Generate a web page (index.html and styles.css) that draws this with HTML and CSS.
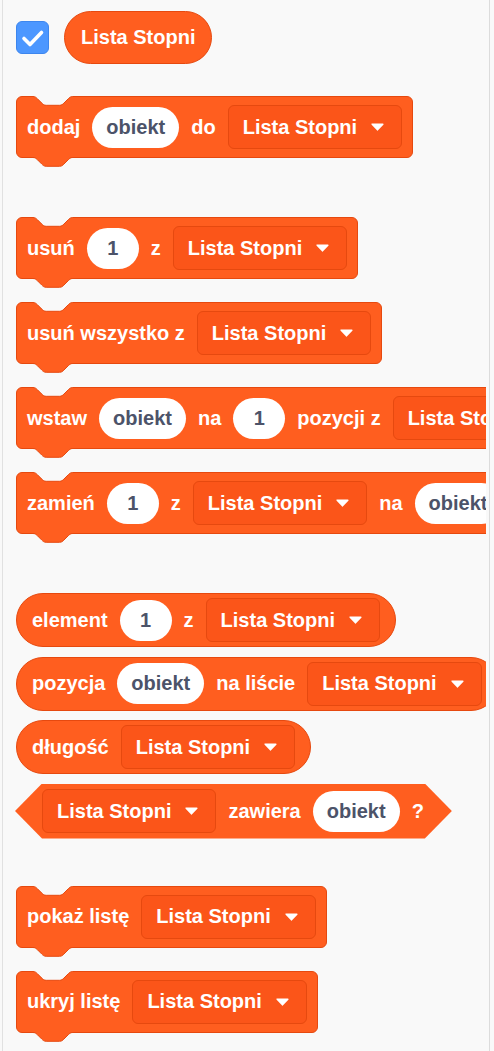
FILE: index.html
```html
<!DOCTYPE html>
<html lang="pl">
<head>
<meta charset="utf-8">
<title>Lista Stopni</title>
<link rel="stylesheet" href="styles.css">
</head>
<body>
<div class="frame">
  <div class="palette">

    <div class="var-row">
      <span class="checkbox">
        <svg viewBox="0 0 33 33" width="33" height="33"><path d="M8 17.5 L14 23.5 L25.5 11.5" fill="none" stroke="#fff" stroke-width="3.6" stroke-linecap="round" stroke-linejoin="round"/></svg>
      </span>
      <span class="reporter var">Lista Stopni</span>
    </div>

    <div class="stack gap-first">
      <svg class="notch-top" viewBox="0 0 40 11" width="40" height="11"><path class="nt-fill" d="M0,0 L0,0.5 c2.2,0 3.3,1.1 4.4,2.2 l4.4,4.4 c1.1,1.1 2.2,2.2 4.4,2.2 h13.3 c2.2,0 3.3,-1.1 4.4,-2.2 l4.4,-4.4 c1.1,-1.1 2.2,-2.2 4.4,-2.2 L39.7,0 Z"/><path class="n-line" d="M0,0.5 c2.2,0 3.3,1.1 4.4,2.2 l4.4,4.4 c1.1,1.1 2.2,2.2 4.4,2.2 h13.3 c2.2,0 3.3,-1.1 4.4,-2.2 l4.4,-4.4 c1.1,-1.1 2.2,-2.2 4.4,-2.2"/></svg>
      <span class="label">dodaj</span>
      <span class="input">obiekt</span>
      <span class="label">do</span>
      <span class="dropdown">Lista Stopni<svg class="arrow" viewBox="0 0 13 8" width="13" height="8"><path d="M1.2 1.2 H11.8 L6.5 6.8 Z"/></svg></span>
      <svg class="notch-bottom" viewBox="0 0 40 11" width="40" height="11"><path class="nb-fill" d="M0,0 L0,0.5 c2.2,0 3.3,1.1 4.4,2.2 l4.4,4.4 c1.1,1.1 2.2,2.2 4.4,2.2 h13.3 c2.2,0 3.3,-1.1 4.4,-2.2 l4.4,-4.4 c1.1,-1.1 2.2,-2.2 4.4,-2.2 L39.7,0 Z"/><path class="n-line" d="M0,0.5 c2.2,0 3.3,1.1 4.4,2.2 l4.4,4.4 c1.1,1.1 2.2,2.2 4.4,2.2 h13.3 c2.2,0 3.3,-1.1 4.4,-2.2 l4.4,-4.4 c1.1,-1.1 2.2,-2.2 4.4,-2.2"/></svg>
    </div>

    <div class="stack gap-group">
      <svg class="notch-top" viewBox="0 0 40 11" width="40" height="11"><path class="nt-fill" d="M0,0 L0,0.5 c2.2,0 3.3,1.1 4.4,2.2 l4.4,4.4 c1.1,1.1 2.2,2.2 4.4,2.2 h13.3 c2.2,0 3.3,-1.1 4.4,-2.2 l4.4,-4.4 c1.1,-1.1 2.2,-2.2 4.4,-2.2 L39.7,0 Z"/><path class="n-line" d="M0,0.5 c2.2,0 3.3,1.1 4.4,2.2 l4.4,4.4 c1.1,1.1 2.2,2.2 4.4,2.2 h13.3 c2.2,0 3.3,-1.1 4.4,-2.2 l4.4,-4.4 c1.1,-1.1 2.2,-2.2 4.4,-2.2"/></svg>
      <span class="label">usuń</span>
      <span class="input num">1</span>
      <span class="label">z</span>
      <span class="dropdown">Lista Stopni<svg class="arrow" viewBox="0 0 13 8" width="13" height="8"><path d="M1.2 1.2 H11.8 L6.5 6.8 Z"/></svg></span>
      <svg class="notch-bottom" viewBox="0 0 40 11" width="40" height="11"><path class="nb-fill" d="M0,0 L0,0.5 c2.2,0 3.3,1.1 4.4,2.2 l4.4,4.4 c1.1,1.1 2.2,2.2 4.4,2.2 h13.3 c2.2,0 3.3,-1.1 4.4,-2.2 l4.4,-4.4 c1.1,-1.1 2.2,-2.2 4.4,-2.2 L39.7,0 Z"/><path class="n-line" d="M0,0.5 c2.2,0 3.3,1.1 4.4,2.2 l4.4,4.4 c1.1,1.1 2.2,2.2 4.4,2.2 h13.3 c2.2,0 3.3,-1.1 4.4,-2.2 l4.4,-4.4 c1.1,-1.1 2.2,-2.2 4.4,-2.2"/></svg>
    </div>

    <div class="stack gap-stack">
      <svg class="notch-top" viewBox="0 0 40 11" width="40" height="11"><path class="nt-fill" d="M0,0 L0,0.5 c2.2,0 3.3,1.1 4.4,2.2 l4.4,4.4 c1.1,1.1 2.2,2.2 4.4,2.2 h13.3 c2.2,0 3.3,-1.1 4.4,-2.2 l4.4,-4.4 c1.1,-1.1 2.2,-2.2 4.4,-2.2 L39.7,0 Z"/><path class="n-line" d="M0,0.5 c2.2,0 3.3,1.1 4.4,2.2 l4.4,4.4 c1.1,1.1 2.2,2.2 4.4,2.2 h13.3 c2.2,0 3.3,-1.1 4.4,-2.2 l4.4,-4.4 c1.1,-1.1 2.2,-2.2 4.4,-2.2"/></svg>
      <span class="label">usuń wszystko z</span>
      <span class="dropdown">Lista Stopni<svg class="arrow" viewBox="0 0 13 8" width="13" height="8"><path d="M1.2 1.2 H11.8 L6.5 6.8 Z"/></svg></span>
      <svg class="notch-bottom" viewBox="0 0 40 11" width="40" height="11"><path class="nb-fill" d="M0,0 L0,0.5 c2.2,0 3.3,1.1 4.4,2.2 l4.4,4.4 c1.1,1.1 2.2,2.2 4.4,2.2 h13.3 c2.2,0 3.3,-1.1 4.4,-2.2 l4.4,-4.4 c1.1,-1.1 2.2,-2.2 4.4,-2.2 L39.7,0 Z"/><path class="n-line" d="M0,0.5 c2.2,0 3.3,1.1 4.4,2.2 l4.4,4.4 c1.1,1.1 2.2,2.2 4.4,2.2 h13.3 c2.2,0 3.3,-1.1 4.4,-2.2 l4.4,-4.4 c1.1,-1.1 2.2,-2.2 4.4,-2.2"/></svg>
    </div>

    <div class="stack gap-stack">
      <svg class="notch-top" viewBox="0 0 40 11" width="40" height="11"><path class="nt-fill" d="M0,0 L0,0.5 c2.2,0 3.3,1.1 4.4,2.2 l4.4,4.4 c1.1,1.1 2.2,2.2 4.4,2.2 h13.3 c2.2,0 3.3,-1.1 4.4,-2.2 l4.4,-4.4 c1.1,-1.1 2.2,-2.2 4.4,-2.2 L39.7,0 Z"/><path class="n-line" d="M0,0.5 c2.2,0 3.3,1.1 4.4,2.2 l4.4,4.4 c1.1,1.1 2.2,2.2 4.4,2.2 h13.3 c2.2,0 3.3,-1.1 4.4,-2.2 l4.4,-4.4 c1.1,-1.1 2.2,-2.2 4.4,-2.2"/></svg>
      <span class="label">wstaw</span>
      <span class="input">obiekt</span>
      <span class="label">na</span>
      <span class="input num">1</span>
      <span class="label">pozycji z</span>
      <span class="dropdown">Lista Stopni<svg class="arrow" viewBox="0 0 13 8" width="13" height="8"><path d="M1.2 1.2 H11.8 L6.5 6.8 Z"/></svg></span>
      <svg class="notch-bottom" viewBox="0 0 40 11" width="40" height="11"><path class="nb-fill" d="M0,0 L0,0.5 c2.2,0 3.3,1.1 4.4,2.2 l4.4,4.4 c1.1,1.1 2.2,2.2 4.4,2.2 h13.3 c2.2,0 3.3,-1.1 4.4,-2.2 l4.4,-4.4 c1.1,-1.1 2.2,-2.2 4.4,-2.2 L39.7,0 Z"/><path class="n-line" d="M0,0.5 c2.2,0 3.3,1.1 4.4,2.2 l4.4,4.4 c1.1,1.1 2.2,2.2 4.4,2.2 h13.3 c2.2,0 3.3,-1.1 4.4,-2.2 l4.4,-4.4 c1.1,-1.1 2.2,-2.2 4.4,-2.2"/></svg>
    </div>

    <div class="stack gap-stack">
      <svg class="notch-top" viewBox="0 0 40 11" width="40" height="11"><path class="nt-fill" d="M0,0 L0,0.5 c2.2,0 3.3,1.1 4.4,2.2 l4.4,4.4 c1.1,1.1 2.2,2.2 4.4,2.2 h13.3 c2.2,0 3.3,-1.1 4.4,-2.2 l4.4,-4.4 c1.1,-1.1 2.2,-2.2 4.4,-2.2 L39.7,0 Z"/><path class="n-line" d="M0,0.5 c2.2,0 3.3,1.1 4.4,2.2 l4.4,4.4 c1.1,1.1 2.2,2.2 4.4,2.2 h13.3 c2.2,0 3.3,-1.1 4.4,-2.2 l4.4,-4.4 c1.1,-1.1 2.2,-2.2 4.4,-2.2"/></svg>
      <span class="label">zamień</span>
      <span class="input num">1</span>
      <span class="label">z</span>
      <span class="dropdown">Lista Stopni<svg class="arrow" viewBox="0 0 13 8" width="13" height="8"><path d="M1.2 1.2 H11.8 L6.5 6.8 Z"/></svg></span>
      <span class="label">na</span>
      <span class="input">obiekt</span>
      <svg class="notch-bottom" viewBox="0 0 40 11" width="40" height="11"><path class="nb-fill" d="M0,0 L0,0.5 c2.2,0 3.3,1.1 4.4,2.2 l4.4,4.4 c1.1,1.1 2.2,2.2 4.4,2.2 h13.3 c2.2,0 3.3,-1.1 4.4,-2.2 l4.4,-4.4 c1.1,-1.1 2.2,-2.2 4.4,-2.2 L39.7,0 Z"/><path class="n-line" d="M0,0.5 c2.2,0 3.3,1.1 4.4,2.2 l4.4,4.4 c1.1,1.1 2.2,2.2 4.4,2.2 h13.3 c2.2,0 3.3,-1.1 4.4,-2.2 l4.4,-4.4 c1.1,-1.1 2.2,-2.2 4.4,-2.2"/></svg>
    </div>

    <div class="reporter gap-group">
      <span class="label">element</span>
      <span class="input num">1</span>
      <span class="label">z</span>
      <span class="dropdown">Lista Stopni<svg class="arrow" viewBox="0 0 13 8" width="13" height="8"><path d="M1.2 1.2 H11.8 L6.5 6.8 Z"/></svg></span>
    </div>

    <div class="reporter gap-rep">
      <span class="label">pozycja</span>
      <span class="input">obiekt</span>
      <span class="label">na liście</span>
      <span class="dropdown">Lista Stopni<svg class="arrow" viewBox="0 0 13 8" width="13" height="8"><path d="M1.2 1.2 H11.8 L6.5 6.8 Z"/></svg></span>
    </div>

    <div class="reporter gap-rep">
      <span class="label">długość</span>
      <span class="dropdown">Lista Stopni<svg class="arrow" viewBox="0 0 13 8" width="13" height="8"><path d="M1.2 1.2 H11.8 L6.5 6.8 Z"/></svg></span>
    </div>

    <div class="boolean gap-rep">
      <span class="dropdown">Lista Stopni<svg class="arrow" viewBox="0 0 13 8" width="13" height="8"><path d="M1.2 1.2 H11.8 L6.5 6.8 Z"/></svg></span>
      <span class="label">zawiera</span>
      <span class="input">obiekt</span>
      <span class="label">?</span>
    </div>

    <div class="stack gap-last">
      <svg class="notch-top" viewBox="0 0 40 11" width="40" height="11"><path class="nt-fill" d="M0,0 L0,0.5 c2.2,0 3.3,1.1 4.4,2.2 l4.4,4.4 c1.1,1.1 2.2,2.2 4.4,2.2 h13.3 c2.2,0 3.3,-1.1 4.4,-2.2 l4.4,-4.4 c1.1,-1.1 2.2,-2.2 4.4,-2.2 L39.7,0 Z"/><path class="n-line" d="M0,0.5 c2.2,0 3.3,1.1 4.4,2.2 l4.4,4.4 c1.1,1.1 2.2,2.2 4.4,2.2 h13.3 c2.2,0 3.3,-1.1 4.4,-2.2 l4.4,-4.4 c1.1,-1.1 2.2,-2.2 4.4,-2.2"/></svg>
      <span class="label">pokaż listę</span>
      <span class="dropdown">Lista Stopni<svg class="arrow" viewBox="0 0 13 8" width="13" height="8"><path d="M1.2 1.2 H11.8 L6.5 6.8 Z"/></svg></span>
      <svg class="notch-bottom" viewBox="0 0 40 11" width="40" height="11"><path class="nb-fill" d="M0,0 L0,0.5 c2.2,0 3.3,1.1 4.4,2.2 l4.4,4.4 c1.1,1.1 2.2,2.2 4.4,2.2 h13.3 c2.2,0 3.3,-1.1 4.4,-2.2 l4.4,-4.4 c1.1,-1.1 2.2,-2.2 4.4,-2.2 L39.7,0 Z"/><path class="n-line" d="M0,0.5 c2.2,0 3.3,1.1 4.4,2.2 l4.4,4.4 c1.1,1.1 2.2,2.2 4.4,2.2 h13.3 c2.2,0 3.3,-1.1 4.4,-2.2 l4.4,-4.4 c1.1,-1.1 2.2,-2.2 4.4,-2.2"/></svg>
    </div>

    <div class="stack gap-stack">
      <svg class="notch-top" viewBox="0 0 40 11" width="40" height="11"><path class="nt-fill" d="M0,0 L0,0.5 c2.2,0 3.3,1.1 4.4,2.2 l4.4,4.4 c1.1,1.1 2.2,2.2 4.4,2.2 h13.3 c2.2,0 3.3,-1.1 4.4,-2.2 l4.4,-4.4 c1.1,-1.1 2.2,-2.2 4.4,-2.2 L39.7,0 Z"/><path class="n-line" d="M0,0.5 c2.2,0 3.3,1.1 4.4,2.2 l4.4,4.4 c1.1,1.1 2.2,2.2 4.4,2.2 h13.3 c2.2,0 3.3,-1.1 4.4,-2.2 l4.4,-4.4 c1.1,-1.1 2.2,-2.2 4.4,-2.2"/></svg>
      <span class="label">ukryj listę</span>
      <span class="dropdown">Lista Stopni<svg class="arrow" viewBox="0 0 13 8" width="13" height="8"><path d="M1.2 1.2 H11.8 L6.5 6.8 Z"/></svg></span>
      <svg class="notch-bottom" viewBox="0 0 40 11" width="40" height="11"><path class="nb-fill" d="M0,0 L0,0.5 c2.2,0 3.3,1.1 4.4,2.2 l4.4,4.4 c1.1,1.1 2.2,2.2 4.4,2.2 h13.3 c2.2,0 3.3,-1.1 4.4,-2.2 l4.4,-4.4 c1.1,-1.1 2.2,-2.2 4.4,-2.2 L39.7,0 Z"/><path class="n-line" d="M0,0.5 c2.2,0 3.3,1.1 4.4,2.2 l4.4,4.4 c1.1,1.1 2.2,2.2 4.4,2.2 h13.3 c2.2,0 3.3,-1.1 4.4,-2.2 l4.4,-4.4 c1.1,-1.1 2.2,-2.2 4.4,-2.2"/></svg>
    </div>

  </div>
  <div class="gutter"></div>
  <div class="rule"></div>
</div>
</body>
</html>
```

FILE: styles.css
```css
html, body {
  margin: 0;
  padding: 0;
  background: #f9f9f9;
}

body {
  font-family: "Liberation Sans", Arial, Helvetica, sans-serif;
  font-size: 20px;
  font-weight: 700;
  color: #fff;
}

.frame {
  display: flex;
  height: 1051px;
  overflow: hidden;
}

.palette {
  margin-left: 2px;
  border-left: 1px solid #e1e1e1;
  width: 484px;
  box-sizing: border-box;
  padding: 11px 0 0 13px;
  overflow: hidden;
  display: flex;
  flex-direction: column;
  align-items: flex-start;
}

.gutter {
  width: 3px;
}

.rule {
  width: 1px;
  background: #dcdcdc;
}

/* variable row */
.var-row {
  display: flex;
  align-items: center;
  gap: 15px;
}

.checkbox {
  width: 33px;
  height: 33px;
  box-sizing: border-box;
  border-radius: 6px;
  background: #4c97ff;
  border: 1px solid #3d86ee;
  display: flex;
  align-items: center;
  justify-content: center;
  flex-shrink: 0;
}

.checkbox svg {
  display: block;
  margin: -1px;
}

/* common text parts */
.label {
  white-space: nowrap;
  flex-shrink: 0;
  line-height: 23px;
}

.input {
  flex-shrink: 0;
  height: 41px;
  box-sizing: border-box;
  padding: 0 14px;
  border-radius: 21px;
  background: #fff;
  color: #4c5369;
  display: flex;
  align-items: center;
  justify-content: center;
  white-space: nowrap;
}

.input.num {
  min-width: 52px;
  padding: 0 10px;
}

.dropdown {
  flex-shrink: 0;
  position: relative;
  height: 44px;
  box-sizing: border-box;
  padding: 0 17px 0 14px;
  border-radius: 6px;
  background: #fb5519;
  border: 1px solid #e6490f;
  display: flex;
  align-items: center;
  gap: 14px;
  white-space: nowrap;
}

.arrow {
  display: block;
  flex-shrink: 0;
}

.arrow path {
  fill: #fff;
  stroke: #fff;
  stroke-width: 1.6;
  stroke-linejoin: round;
}

/* stack (command) block */
.stack {
  position: relative;
  flex-shrink: 0;
  width: max-content;
  height: 62px;
  box-sizing: border-box;
  padding: 0 10px;
  background: #ff5e1f;
  border: 1px solid #e6490f;
  border-radius: 6px;
  display: flex;
  align-items: center;
  gap: 12px;
}

.notch-top,
.notch-bottom {
  position: absolute;
  left: 16px;
  display: block;
  overflow: visible;
}

.notch-top {
  top: -1px;
}

.notch-bottom {
  bottom: -11px;
}

.nt-fill {
  fill: #f9f9f9;
}

.nb-fill {
  fill: #ff5e1f;
}

.n-line {
  fill: none;
  stroke: #e6490f;
  stroke-width: 1;
}

/* reporter block */
.reporter {
  flex-shrink: 0;
  width: max-content;
  height: 54px;
  box-sizing: border-box;
  padding: 0 15px;
  background: #ff5e1f;
  border: 1px solid #e6490f;
  border-radius: 27px;
  display: flex;
  align-items: center;
  gap: 12px;
  white-space: nowrap;
}

.reporter.var {
  height: 53px;
  padding: 0 16px;
}

/* boolean block */
.boolean {
  flex-shrink: 0;
  width: max-content;
  height: 55px;
  box-sizing: border-box;
  padding: 0 28px 0 27px;
  background: #ff5e1f;
  clip-path: polygon(27px 0, calc(100% - 27px) 0, 100% 50%, calc(100% - 27px) 100%, 27px 100%, 0 50%);
  margin-left: -1px;
  display: flex;
  align-items: center;
  gap: 12px;
}

/* vertical spacing */
.gap-first { margin-top: 32px; }
.gap-group { margin-top: 59px; }
.gap-stack { margin-top: 23px; }
.gap-rep { margin-top: 9.5px; }
.gap-last { margin-top: 47px; }
```
